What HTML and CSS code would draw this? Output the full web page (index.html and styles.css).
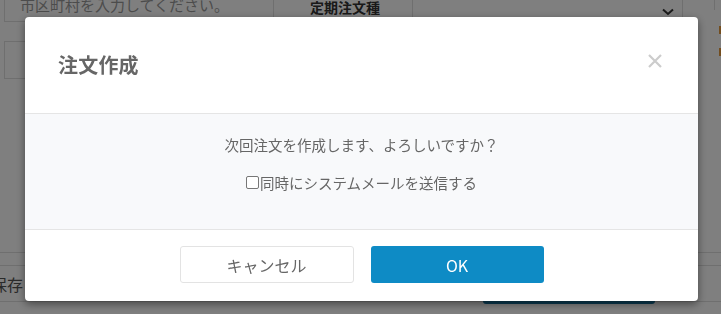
FILE: index.html
```html
<!DOCTYPE html>
<html lang="ja">
<head>
  <meta charset="UTF-8">
  <meta name="viewport" content="width=device-width, initial-scale=1.0">
  <title>注文作成</title>
  <link rel="stylesheet" href="styles.css">
</head>
<body>
  <!-- 背景のフォーム -->
  <div class="page">
    <div class="row row-top">
      <div class="field"><span class="placeholder">市区町村を入力してください。</span></div>
      <div class="label">定期注文種</div>
      <div class="select">
        <svg class="chev" width="12" height="8" viewBox="0 0 12 8"><polyline points="1,1.5 6,6 11,1.5" fill="none" stroke="#333" stroke-width="2"/></svg>
      </div>
      <div class="side"><span class="mark"></span><span class="mark"></span></div>
    </div>

    <div class="row row-second">
      <div class="field"></div>
    </div>

    <div class="bottom">
      <div class="save-row">
        <span class="save">保存</span>
        <span class="save-btn"></span>
      </div>
    </div>
  </div>

  <div class="overlay"></div>

  <!-- モーダル -->
  <div class="modal">
    <div class="modal-header">
      <h4 class="modal-title">注文作成</h4>
      <button class="close" type="button">
        <svg width="14" height="14" viewBox="0 0 14 14"><path d="M1 1 L13 13 M13 1 L1 13" stroke="#cccccc" stroke-width="2.2"/></svg>
      </button>
    </div>
    <div class="modal-body">
      <p class="message">次回注文を作成します、よろしいですか？</p>
      <label class="check"><input type="checkbox">同時にシステムメールを送信する</label>
    </div>
    <div class="modal-footer">
      <button class="btn btn-cancel" type="button">キャンセル</button>
      <button class="btn btn-ok" type="button">OK</button>
    </div>
  </div>
</body>
</html>
```

FILE: styles.css
```css
body {
  margin: 0;
  padding: 0;
  font-family: "Noto Sans CJK JP", "Noto Sans", sans-serif;
  color: #333;
  background-color: #ffffff;
  overflow: hidden;
}

.page {
  height: 314px;
  overflow: hidden;
}

.row {
  display: flex;
}

.row-top {
  margin-top: -16px;
  height: 38px;
}

.field {
  margin-left: 4px;
  width: 270px;
  border: 1px solid #dedede;
  display: flex;
  align-items: center;
  padding-left: 15px;
  box-sizing: border-box;
  height: 38px;
}

.placeholder {
  font-size: 15px;
  color: #999;
  white-space: nowrap;
  margin-top: 2px;
}

.label {
  width: 138px;
  box-sizing: border-box;
  padding-left: 36px;
  padding-top: 13px;
  font-size: 14px;
  font-weight: bold;
  color: #333;
  white-space: nowrap;
}

.select {
  width: 271px;
  height: 38px;
  box-sizing: border-box;
  border: 1px solid #dedede;
  position: relative;
}

.chev {
  position: absolute;
  right: 8px;
  top: 23px;
}

.side {
  width: 31px;
  border-right: 1px solid #dedede;
  height: 26px;
  position: relative;
}

.mark {
  position: absolute;
  left: 36px;
  width: 3px;
  height: 8px;
  background-color: #e69a3c;
}

.mark:first-child {
  top: 42px;
}

.mark:last-child {
  top: 64px;
}

.row-second {
  margin-top: 19px;
}

.bottom {
  margin-top: 173px;
  border-top: 1px solid #dedede;
}

.save-row {
  margin-top: 12px;
  height: 37px;
  border-top: 1px solid #dedede;
  border-bottom: 1px solid #dedede;
  position: relative;
  box-sizing: border-box;
  display: flex;
  align-items: center;
}

.save {
  margin-left: -9px;
  font-size: 16px;
  color: #555;
}

.save-btn {
  position: absolute;
  left: 483px;
  top: -4px;
  width: 172px;
  height: 42px;
  border-radius: 3px;
  background-color: #16749f;
}

.overlay {
  position: fixed;
  inset: 0;
  background-color: rgba(0, 0, 0, 0.5);
}

.modal {
  position: fixed;
  top: 17px;
  left: 25px;
  width: 673px;
  background-color: #ffffff;
  border-radius: 4px;
  box-shadow: 0 3px 9px rgba(0, 0, 0, 0.45);
  overflow: hidden;
}

.modal-header {
  height: 96px;
  display: flex;
  align-items: center;
  justify-content: space-between;
  padding: 0 36px 0 33px;
  border-bottom: 1px solid #e5e5e5;
}

.modal-title {
  margin: 0;
  font-size: 20px;
  font-weight: bold;
  color: #666;
  letter-spacing: 0.2px;
  padding-bottom: 2px;
}

.close {
  border: none;
  background: none;
  padding: 0;
  cursor: pointer;
  width: 14px;
  height: 14px;
  display: flex;
  margin-bottom: 9px;
}

.modal-body {
  background-color: #f8f9fb;
  padding: 21px 20px 36px;
  text-align: center;
  border-bottom: 1px solid #e5e5e5;
  color: #666;
  font-size: 14.5px;
}

.message {
  margin: 0 0 17px;
  line-height: 20px;
}

.check {
  display: inline-flex;
  align-items: center;
  line-height: 20px;
}

.check input {
  appearance: none;
  -webkit-appearance: none;
  width: 13px;
  height: 13px;
  margin: 0 1px 0 0;
  border: 1px solid #777;
  border-radius: 2px;
  background-color: #ffffff;
  box-sizing: border-box;
}

.modal-footer {
  height: 71px;
  display: flex;
  justify-content: center;
  align-items: flex-start;
  padding-top: 16px;
  box-sizing: border-box;
  gap: 17px;
}

.btn {
  width: 174px;
  height: 37px;
  border-radius: 3px;
  font-family: "Noto Sans CJK JP", "Noto Sans", sans-serif;
  font-size: 16px;
  cursor: pointer;
}

.btn-cancel {
  background-color: #ffffff;
  border: 1px solid #e3e3e3;
  color: #666;
}

.btn-ok {
  width: 173px;
  background-color: #0e8bc5;
  border: none;
  color: #ffffff;
}
```
